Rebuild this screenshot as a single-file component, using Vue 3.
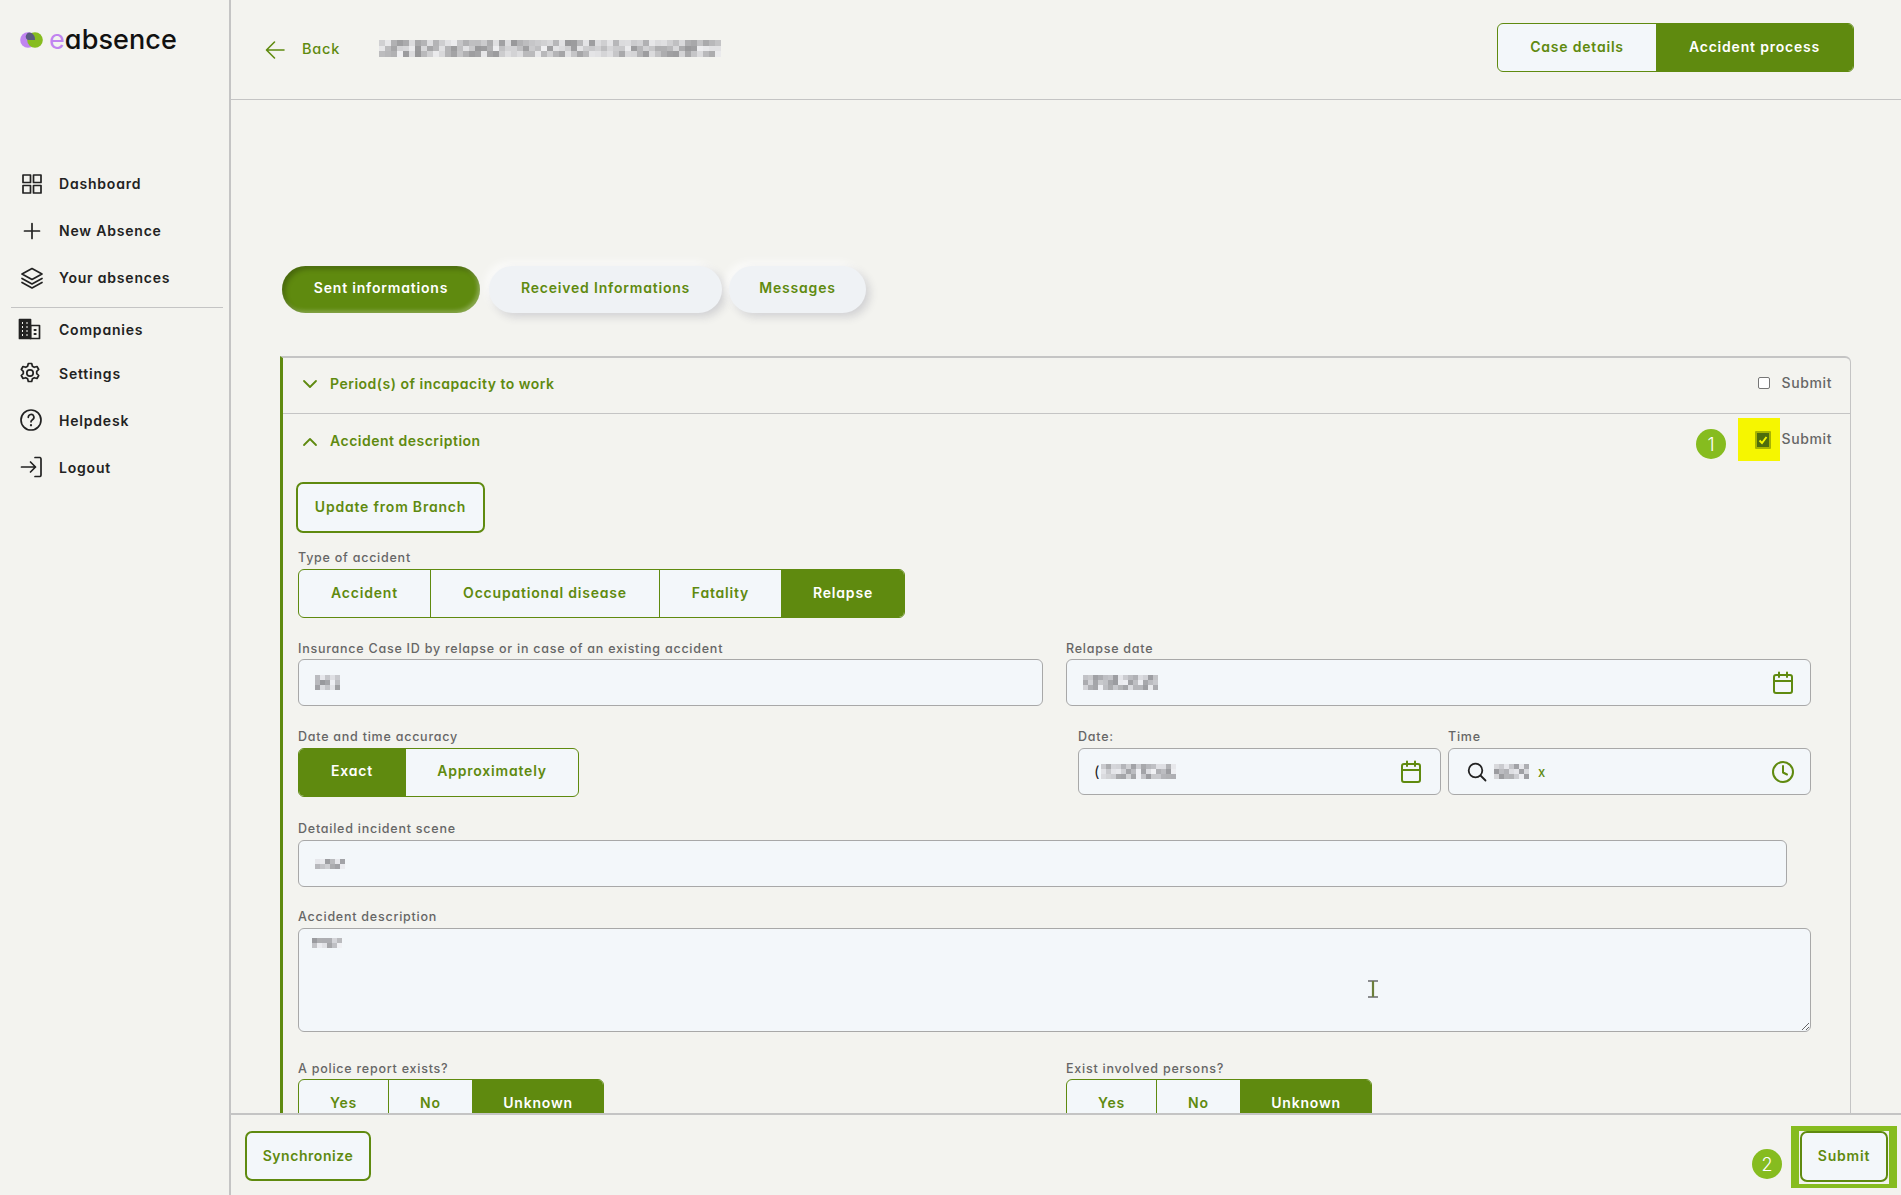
<script setup>
const nav1 = [
  { label: 'Dashboard', icon: 'grid' },
  { label: 'New Absence', icon: 'plus' },
  { label: 'Your absences', icon: 'layers' },
]
const nav2 = [
  { label: 'Companies', icon: 'building', h: 44 },
  { label: 'Settings', icon: 'gear', h: 44 },
  { label: 'Helpdesk', icon: 'help', h: 50 },
  { label: 'Logout', icon: 'logout', h: 44 },
]
function mosaic(seed, cols, rows) {
  const out = []
  let s = seed
  for (let i = 0; i < cols * rows; i++) {
    s = (s * 9301 + 49297) % 233280
    const v = 120 + Math.floor((s / 233280) * 120)
    out.push(`rgb(${v},${v},${v + 4})`)
  }
  return out
}
const blocks = {
  title: mosaic(11, 57, 3),
  id: mosaic(5, 5, 3),
  rel: mosaic(7, 15, 3),
  date: mosaic(9, 15, 3),
  time: mosaic(13, 7, 3),
  scene: mosaic(17, 6, 2),
  desc: mosaic(21, 6, 2),
}
</script>

<template>
  <div class="app">
    <aside class="side">
      <div class="logo">
        <svg width="23" height="16" viewBox="0 0 23 16">
          <circle cx="8" cy="8" r="7.8" fill="#c084f0" />
          <circle cx="15" cy="8" r="7.8" fill="#86bc1f" />
          <path d="M8 8a3.800 3.800 0 0 1 3.500-6.900A7.800 7.800 0 0 1 15 8z" fill="#5a5a80" />
        </svg>
        <span class="logo-text"><i>e</i>absence</span>
      </div>
      <nav class="nav">
        <a v-for="n in nav1" :key="n.label" class="nav-item">
          <span class="ico"><svg width="24" height="24" viewBox="0 0 24 24" fill="none" stroke="#222" stroke-width="1.7" stroke-linecap="round" stroke-linejoin="round">
            <g v-if="n.icon === 'grid'"><rect x="3" y="3" width="7.5" height="7.5" /><rect x="13.5" y="3" width="7.5" height="7.5" /><rect x="3" y="13.5" width="7.5" height="7.5" /><rect x="13.5" y="13.5" width="7.5" height="7.5" /></g>
            <path v-else-if="n.icon === 'plus'" d="M12 4.5v15M4.5 12h15" />
            <path v-else d="M12 2.5 2 8l10 5.5L22 8zM2 12.5 12 18l10-5.500M2 16.500 12 22l10-5.500" />
          </svg></span>
          <span>{{ n.label }}</span>
        </a>
        <div class="nav-sep"></div>
        <a v-for="n in nav2" :key="n.label" class="nav-item two" :style="{ height: n.h + 'px' }">
          <span class="ico"><svg width="24" height="24" viewBox="0 0 24 24" fill="none" stroke="#222" stroke-width="1.7" stroke-linecap="round" stroke-linejoin="round">
            <g v-if="n.icon === 'building'">
              <path d="M1.500 2.500h11v19h-11z" fill="#222" />
              <path d="M12.500 8.500h9v13h-9z" />
              <path d="M4 6h1M8.500 6h1M4 10h1M8.500 10h1M4 14h1M8.500 14h1M4 18h1M8.500 18h1" stroke="#f3f3ef" stroke-width="1.800" stroke-linecap="butt" />
              <path d="M16.500 13h1.200M16.500 17h1.200" stroke-width="2" />
            </g>
            <g v-else-if="n.icon === 'gear'">
              <circle cx="12" cy="12" r="3.200" />
              <path d="M10.300 2.500h3.400l.7 2.700 1.900 1.100 2.700-.8 1.700 3-2 1.900v2.200l2 1.900-1.700 3-2.700-.8-1.900 1.100-.7 2.700h-3.400l-.7-2.700-1.900-1.100-2.700.8-1.700-3 2-1.900v-2.200l-2-1.900 1.700-3 2.700.8 1.900-1.100z" />
            </g>
            <g v-else-if="n.icon === 'help'">
              <circle cx="13" cy="12" r="10" />
              <path d="M10.300 9.300a2.800 2.800 0 1 1 4.200 2.400c-1 .6-1.500 1.100-1.500 2.100" />
              <path d="M13 17.200v.1" stroke-width="2.200" />
            </g>
            <g v-else>
              <path d="M17 2.500h5a1.500 1.500 0 0 1 1 1.500v16a1.500 1.500 0 0 1-1 1.500h-5" />
              <path d="M3.500 12h14M12.500 7l5 5-5 5" />
            </g>
          </svg></span>
          <span>{{ n.label }}</span>
        </a>
      </nav>
    </aside>

    <main class="main">
      <header class="top">
        <a class="back">
          <svg width="20" height="20" viewBox="0 0 20 20" fill="none" stroke="#5f8a0f" stroke-width="1.600" stroke-linecap="round" stroke-linejoin="round"><path d="M19 10H2M9.500 2 1.500 10l8 8" /></svg>
          <span class="back-text">Back</span>
        </a>
        <div class="mosaic title"><b v-for="(c, i) in blocks.title" :key="i" :style="{ background: c }"></b></div>
        <div class="seg top-seg">
          <button class="off w158">Case details</button>
          <button class="on w197">Accident process</button>
        </div>
      </header>

      <section class="body">
        <div class="tabs">
          <button class="tab active">Sent informations</button>
          <button class="tab t2">Received Informations</button>
          <button class="tab t3">Messages</button>
        </div>

        <div class="panel">
          <div class="row-head first">
            <svg class="chev" width="16" height="10" viewBox="0 0 16 10" fill="none" stroke="#5f8a0f" stroke-width="1.800" stroke-linecap="round" stroke-linejoin="round"><path d="M2 2l6 6 6-6" /></svg>
            <span class="row-title">Period(s) of incapacity to work</span>
            <span class="check-wrap"><span class="check"></span><span class="check-label">Submit</span></span>
          </div>
          <div class="row-head second">
            <svg class="chev" width="16" height="10" viewBox="0 0 16 10" fill="none" stroke="#5f8a0f" stroke-width="1.800" stroke-linecap="round" stroke-linejoin="round"><path d="M2 8l6-6 6 6" /></svg>
            <span class="row-title">Accident description</span>
            <span class="check-wrap">
              <span class="badge b1">1</span>
              <span class="hl">
                <span class="check on">
                  <svg width="10" height="10" viewBox="0 0 10 10" fill="none" stroke="#f6f600" stroke-width="2"><path d="M1.500 5.500 4 8l4.500-6" /></svg>
                </span>
              </span>
              <span class="check-label">Submit</span>
            </span>
          </div>

          <div class="form">
            <button class="btn update">Update from Branch</button>

            <label class="lab l-type">Type of accident</label>
            <div class="seg seg-type">
              <button class="off" style="width:132px">Accident</button>
              <button class="off" style="width:229px">Occupational disease</button>
              <button class="off" style="width:122px">Fatality</button>
              <button class="on" style="width:122px">Relapse</button>
            </div>

            <div class="cols two-col">
              <div class="fld">
                <label class="lab">Insurance Case ID by relapse or in case of an existing accident</label>
                <div class="input"><div class="mosaic small c5"><b v-for="(c, i) in blocks.id" :key="i" :style="{ background: c }"></b></div></div>
              </div>
              <div class="fld">
                <label class="lab">Relapse date</label>
                <div class="input">
                  <div class="mosaic small c15"><b v-for="(c, i) in blocks.rel" :key="i" :style="{ background: c }"></b></div>
                  <svg class="fi cal1" width="22" height="24" viewBox="0 0 22 24" fill="none" stroke="#5f8a0f" stroke-width="2" stroke-linecap="round" stroke-linejoin="round"><rect x="2" y="4" width="18" height="18" rx="2" /><path d="M2 10h18M7 1.500V6M15 1.500V6" /></svg>
                </div>
              </div>
            </div>

            <div class="cols acc">
              <div class="fld acc-left">
                <label class="lab up">Date and time accuracy</label>
                <div class="seg seg-acc">
                  <button class="on" style="width:107px">Exact</button>
                  <button class="off" style="width:172px">Approximately</button>
                </div>
              </div>
              <div class="fld dt">
                <label class="lab up">Date:</label>
                <div class="input">
                  <span class="paren">(</span>
                  <div class="mosaic small c15"><b v-for="(c, i) in blocks.date" :key="i" :style="{ background: c }"></b></div>
                  <svg class="fi cal2" width="22" height="24" viewBox="0 0 22 24" fill="none" stroke="#5f8a0f" stroke-width="2" stroke-linecap="round" stroke-linejoin="round"><rect x="2" y="4" width="18" height="18" rx="2" /><path d="M2 10h18M7 1.500V6M15 1.500V6" /></svg>
                </div>
              </div>
              <div class="fld dt">
                <label class="lab up">Time</label>
                <div class="input">
                  <svg class="search" width="20" height="20" viewBox="0 0 20 20" fill="none" stroke="#222" stroke-width="1.800" stroke-linecap="round"><circle cx="8.500" cy="8.500" r="6.800" /><path d="m13.500 13.500 5 5" /></svg>
                  <div class="mosaic small c7"><b v-for="(c, i) in blocks.time" :key="i" :style="{ background: c }"></b></div>
                  <span class="x">x</span>
                  <svg class="fi" width="24" height="24" viewBox="0 0 24 24" fill="none" stroke="#5f8a0f" stroke-width="2" stroke-linecap="round" stroke-linejoin="round"><circle cx="12" cy="12" r="10" /><path d="M12 6v6.500l4 2" /></svg>
                </div>
              </div>
            </div>

            <div class="fld scene">
              <label class="lab up">Detailed incident scene</label>
              <div class="input"><div class="mosaic small c6"><b v-for="(c, i) in blocks.scene" :key="i" :style="{ background: c }"></b></div></div>
            </div>

            <div class="fld descr">
              <label class="lab up">Accident description</label>
              <div class="ta-wrap">
                <textarea class="ta"></textarea>
                <div class="mosaic small c6 ta-text"><b v-for="(c, i) in blocks.desc" :key="i" :style="{ background: c }"></b></div>
                <svg class="cursor" width="12" height="18" viewBox="0 0 12 18" fill="none"><path d="M1 1h10M1 17h10" stroke="#222" stroke-width="1.200" /><path d="M6 1v16" stroke="#6b7f3a" stroke-width="2.200" /></svg>
              </div>
            </div>

            <div class="cols two-col yn">
              <div class="fld">
                <label class="lab">A police report exists?</label>
                <div class="seg seg-yn">
                  <button class="off" style="width:90px">Yes</button>
                  <button class="off" style="width:84px">No</button>
                  <button class="on" style="width:130px">Unknown</button>
                </div>
              </div>
              <div class="fld">
                <label class="lab">Exist involved persons?</label>
                <div class="seg seg-yn">
                  <button class="off" style="width:90px">Yes</button>
                  <button class="off" style="width:84px">No</button>
                  <button class="on" style="width:130px">Unknown</button>
                </div>
              </div>
            </div>
          </div>
        </div>
      </section>

      <footer class="foot">
        <button class="btn sync">Synchronize</button>
        <span class="badge b2">2</span>
        <span class="submit-hl"><button class="btn submit">Submit</button></span>
      </footer>
    </main>
  </div>
</template>

<style>
html, body { margin: 0; height: 100%; overflow: hidden; background: #f3f3ef; }
</style>

<style scoped>
* { box-sizing: border-box; }
.app {
  display: flex;
  height: 1195px;
  width: 1901px;
  overflow: hidden;
  background: #f3f3ef;
  font-family: Inter, "Liberation Sans", sans-serif;
  font-feature-settings: "cv11" 1;
  font-size: 14px;
  font-weight: 500;
  letter-spacing: .8px;
  color: #222;
}
button { font: inherit; letter-spacing: inherit; font-feature-settings: inherit; cursor: pointer; padding: 0 0 2px; }

.side { width: 231px; flex: none; border-right: 2px solid #c4c4c4; }
.logo { display: flex; align-items: center; gap: 6px; height: 40px; margin: 20px 0 0 20px; }
.logo-text { font-size: 27px; font-weight: 500; letter-spacing: .1px; color: #111; line-height: 1; position: relative; top: -1px; }
.logo-text i { font-style: normal; font-weight: 400; color: #c084f0; }
.nav { margin-top: 100px; padding: 0 6px 0 11px; }
.nav-item { display: flex; align-items: center; height: 47px; padding-left: 9px; gap: 15px; font-weight: 600; color: #222; }
.nav-item.two { padding-left: 7px; gap: 17px; }
.ico { display: flex; width: 24px; height: 24px; }
.nav-sep { height: 1px; background: #c4c4c4; margin: 6px 0 -1px; }

.main { flex: 1; min-width: 0; display: flex; flex-direction: column; }
.top { height: 100px; flex: none; border-bottom: 1px solid #c4c4c4; display: flex; align-items: center; padding: 0 47px 0 34px; }
.back { display: flex; align-items: center; gap: 17px; color: #5f8a0f; width: 114px; }
.back-text { margin-top: -2px; font-size: 14.500px; }
.mosaic { display: grid; }
.mosaic b { display: block; }
.title { grid-template-columns: repeat(57, 6px); grid-auto-rows: 5.500px; opacity: .75; margin-top: -2px; }
.seg { display: flex; border-radius: 6px; overflow: hidden; border: 1px solid #5f8a0f; background: #f3f7fa; }
.seg button { border: 0; border-right: 1px solid #5f8a0f; background: none; height: 100%; color: #5f8a0f; font-weight: 600; }
.seg button:last-child { border-right: 0; }
.seg button.on { background: #5f8a0f; color: #fff; }
.top-seg { margin-left: auto; height: 49px; margin-top: -5px; }
.w158 { width: 158px; }
.w197 { width: 197px; }
.top-seg .off { border-right: 0; }

.body { flex: 1; min-height: 0; overflow: hidden; padding: 166px 49px 0 49px; }
.tabs { display: flex; gap: 9px; height: 47px; margin-left: 2px; }
.tab { border: 0; border-radius: 24px; height: 47px; width: 198px; background: #5f8a0f; color: #fff; font-weight: 600; padding-bottom: 5px; box-shadow: inset 3px 3px 5px rgba(0, 0, 0, .25), inset -2px -2px 4px rgba(255, 255, 255, .3); }
.tab.t2, .tab.t3 { background: #eff2f5; color: #5f8a0f; box-shadow: 4px 4px 8px rgba(60, 60, 90, .18), -4px -4px 8px rgba(255, 255, 255, .7); }
.tab.t2 { width: 233px; }
.tab.t3 { width: 137px; margin-left: -2px; }

.panel { margin-top: 43px; width: 1571px; height: 761px; border-top: 2px solid #c4c4c4; border-right: 1px solid #c4c4c4; border-left: 3px solid #5f8a0f; border-top-right-radius: 6px; }
.row-head { display: flex; align-items: center; height: 55px; padding: 0 18px 0 19px; position: relative; }
.row-head.first { border-bottom: 1px solid #c4c4c4; height: 56px; padding-bottom: 3px; }
.chev { flex: none; }
.row-title { margin-left: 12px; color: #5f8a0f; font-weight: 600; margin-top: -3px; letter-spacing: .5px; }
.first .row-title { margin-top: -2px; }
.check-wrap { margin-left: auto; display: flex; align-items: center; gap: 12px; }
.first .check-wrap { margin-top: -3px; }
.check { width: 12px; height: 12px; border: 1px solid #767676; border-radius: 2px; background: #fff; display: block; }
.check-label { color: #666; font-weight: 500; letter-spacing: .6px; }
.hl { position: absolute; left: 1455px; top: 4px; width: 42px; height: 43px; background: #f6f600; display: flex; align-items: center; justify-content: center; padding-left: 8px; }
.check.on { width: 16px; height: 18px; background: #4e6d0c; border: 2px solid #a8b400; border-radius: 1px; display: flex; align-items: center; justify-content: center; margin: 0; }
.second .check-wrap { gap: 0; height: 20px; margin-top: -6px; }
.badge { width: 30px; height: 30px; border-radius: 50%; background: #86bc1f; color: #fff; display: flex; align-items: center; justify-content: center; font-size: 18px; font-weight: 300; letter-spacing: 0; }
.b1 { position: absolute; left: 1413px; top: 15px; }

.form { padding: 13px 0 0 15px; }
.lab { display: block; font-size: 12.500px; color: #666; font-weight: 500; line-height: 15px; letter-spacing: .76px; }
.btn { border: 2px solid #5f8a0f; border-radius: 7px; background: #f3f7fa; color: #5f8a0f; font-weight: 600; display: block; }
.update { width: 189px; height: 51px; margin-left: -2px; }
.l-type { margin-top: 17px; }
.seg-type { width: 607px; height: 49px; margin-top: 4px; }
.cols { display: flex; }
.two-col { gap: 23px; margin-top: 23px; width: 1513px; }
.two-col .fld { width: 745px; }
.fld .lab { margin-bottom: 3px; }
.fld .lab.up { margin-top: -1px; margin-bottom: 4px; }
.input { height: 47px; border: 1px solid #a8a8a8; border-radius: 6px; background: #f3f7fa; display: flex; align-items: center; padding: 0 15px 0 16px; }
.input .fi { margin-left: auto; }
.input .cal1 { margin-right: 1px; }
.input .cal2 { margin-right: 3px; }
.small { grid-template-rows: repeat(3, 5px); opacity: .75; }
.c5 { grid-template-columns: repeat(5, 5px); }
.c15 { grid-template-columns: repeat(15, 5px); }
.c7 { grid-template-columns: repeat(7, 5px); }
.c6 { grid-template-columns: repeat(6, 5px); grid-template-rows: repeat(2, 5px); }
.acc { margin-top: 24px; width: 1513px; }
.acc-left { width: 780px; }
.seg-acc { width: 281px; height: 49px; }
.seg-acc button { padding-bottom: 4px; }
.dt { width: 363px; margin-right: 7px; }
.dt:last-child { margin-right: 0; }
.paren { font-size: 15px; color: #222; margin-right: 1px; margin-left: -1px; font-weight: 400; }
.search { margin-left: 2px; margin-right: 7px; width: 20px; height: 20px; flex: none; }
.x { color: #5f8a0f; margin-left: 9px; font-size: 13px; }
.scene { margin-top: 25px; width: 1489px; }
.descr { margin-top: 23px; width: 1513px; }
.ta-wrap { position: relative; height: 104px; }
.ta { display: block; width: 1513px; height: 104px; border: 1px solid #a8a8a8; border-radius: 6px; background: #f3f7fa; outline: 0; resize: vertical; }
.ta-text { position: absolute; left: 14px; top: 10px; }
.cursor { position: absolute; left: 1069px; top: 52px; }
.yn { margin-top: 29px; }
.seg-yn { width: 306px; height: 49px; border-radius: 6px; }

.foot { height: 82px; flex: none; border-top: 2px solid #c4c4c4; background: #f3f3ef; display: flex; align-items: center; padding: 0 4px 0 14px; position: relative; z-index: 1; }
.sync { width: 126px; height: 50px; margin-top: 2px; letter-spacing: .55px; }
.b2 { margin-left: auto; margin-right: 9px; margin-top: 18px; }
.submit-hl { width: 106px; height: 62px; border-style: solid; border-color: #86bc1f; border-width: 5px 8px 4px; padding: 0 1px; display: flex; justify-content: center; margin-top: 4px; }
.submit { width: 88px; height: 51px; flex: none; }
</style>
